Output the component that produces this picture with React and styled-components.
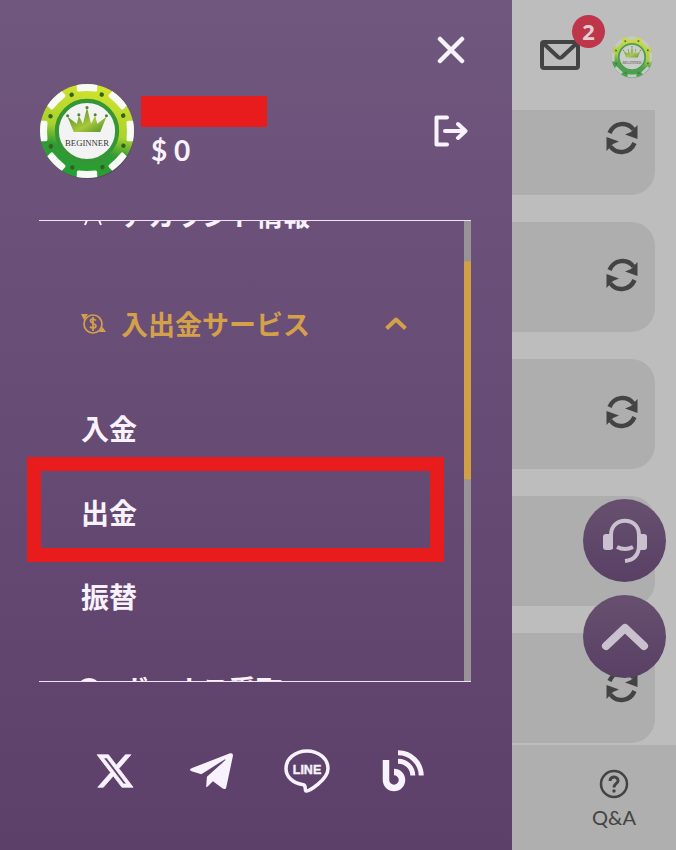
import React, { useLayoutEffect, useRef, useState } from 'react';
import { FaTelegramPlane } from 'react-icons/fa';
import { FaXTwitter } from 'react-icons/fa6';
import styled, { createGlobalStyle } from 'styled-components';


const GlobalStyle = createGlobalStyle`
  * {
    box-sizing: border-box;
  }
  body {
    margin: 0;
    background: #bdbdbd;
    font-family: "Noto Sans", "Noto Sans CJK JP", sans-serif;
  }
  ul {
    margin: 0;
    padding: 0;
    list-style: none;
  }
  button {
    padding: 0;
    border: none;
    background: none;
    color: inherit;
    font: inherit;
    cursor: pointer;
  }
  a {
    color: inherit;
    text-decoration: none;
  }
  svg {
    display: block;
  }
`

const Layout = styled.div`
  display: grid;
  grid-template-columns: minmax(0, 1fr) 164px;
  height: 100vh;
`

/* drawer */

const Drawer = styled.aside`
  display: flex;
  flex-direction: column;
  min-height: 0;
  padding: 0 41px 0 39px;
  background: linear-gradient(#70577e, #5d406a);
  color: #f8f2fd;
`
const CloseRow = styled.div`
  display: flex;
  justify-content: flex-end;
  padding: 36px 6px 0 0;
`
const Profile = styled.div`
  display: flex;
  align-items: center;
  height: 98px;
  margin: 18px 0 40px;
`
const ProfileText = styled.div`
  display: flex;
  flex-direction: column;
  flex: 1;
  padding: 6px 0 0 6px;
`
const NameBar = styled.div`
  width: 126px;
  height: 31px;
  background: #e81c1c;
`
const Balance = styled.span`
  padding-left: 10px;
  font-family: Lato, sans-serif;
  font-size: 28px;
  font-weight: 700;
  line-height: 46px;
`
const LogoutButton = styled.button`
  padding-right: 3px;
`
const MenuArea = styled.nav`
  position: relative;
  display: flex;
  flex: 1;
  min-height: 0;
  border-top: 1px solid #eee4f2;
  border-bottom: 1px solid #eee4f2;
`
const MenuScroll = styled.div`
  flex: 1;
  padding: 28px 0 360px;
  overflow-y: auto;
  scrollbar-width: none;
`
const Track = styled.div`
  width: 7px;
  background: #989397;
`
const Thumb = styled.div`
  background: #d19f45;
`
const MenuTitle = styled.button`
  display: flex;
  align-items: center;
  width: 100%;
  height: 101px;
  margin-bottom: 8px;
  padding: 0 56px 0 42px;
  color: ${props => props.$open ? '#d4a04a' : 'inherit'};
  font-size: 27px;
  font-weight: 700;
`
const TitleIcon = styled.span`
  width: 40px;
`
const TitleLabel = styled.span`
  flex: 1;
  text-align: left;
`
const SubList = styled.ul`
  padding-top: 4px;
`
const SubLink = styled.a`
  display: flex;
  align-items: center;
  height: 84px;
  padding-left: 42px;
  font-size: 28px;
  font-weight: 700;
`
const Marker = styled.div`
  position: absolute;
  top: 236px;
  left: -12px;
  right: 27px;
  height: 105px;
  border: 14px solid #e81c1c;
  pointer-events: none;
`
const Socials = styled.div`
  display: grid;
  grid-template-columns: repeat(4, 1fr);
  place-items: center;
  height: 168px;
  padding: 10px 20px 0 28px;
`

/* page behind the drawer */

const Page = styled.main`
  display: flex;
  flex-direction: column;
  min-height: 0;
  background: #bdbdbd;
  color: #434343;
`
const TopBar = styled.header`
  display: flex;
  justify-content: flex-end;
  align-items: center;
  gap: 31px;
  height: 110px;
  padding: 4px 23px 0 0;
`
const MailButton = styled.button`
  position: relative;
  padding-bottom: 4px;
`
const Badge = styled.span`
  position: absolute;
  top: -25px;
  right: -25px;
  width: 33px;
  height: 33px;
  border-radius: 50%;
  background: #bf3549;
  color: #dcd0d2;
  font-size: 22px;
  font-weight: 700;
  line-height: 33px;
`
const CardList = styled.div`
  display: flex;
  flex: 1;
  flex-direction: column;
  justify-content: flex-end;
  gap: 27px;
  min-height: 0;
  padding: 0 21px 2px 0;
  overflow: hidden;
`
const Card = styled.section`
  display: flex;
  flex-shrink: 0;
  justify-content: flex-end;
  align-items: center;
  height: 110px;
  padding: 0 16px 4px 0;
  border-radius: 0 24px 24px 0;
  background: #aeaeae;
`
const TabBar = styled.footer`
  display: flex;
  justify-content: center;
  height: 105px;
  padding: 24px 0 0 40px;
  background: #afafaf;
`
const TabLink = styled.a`
  display: flex;
  flex-direction: column;
  align-items: center;
  gap: 4px;
  font-family: Lato, sans-serif;
  font-size: 20px;
  line-height: 28px;
`
const Floating = styled.div`
  position: fixed;
  right: 10px;
  bottom: 172px;
  display: flex;
  flex-direction: column;
  gap: 13px;
`
const RoundButton = styled.button`
  display: flex;
  justify-content: center;
  align-items: center;
  width: 83px;
  height: 83px;
  border-radius: 50%;
  background: linear-gradient(#67506f, #594065);
  color: #c9c1cd;
`

const Chip = ({ size, id, dim }) => (
    <svg width={size} height={size} viewBox="0 0 94 94" opacity={dim ? 0.8 : 1}>
        <defs>
            <linearGradient id={id} x1="0.6" y1="0" x2="0.4" y2="1">
                <stop offset="0" stopColor="#d5e42c" />
                <stop offset="0.5" stopColor="#a8d22c" />
                <stop offset="0.7" stopColor="#319a34" />
                <stop offset="1" stopColor="#23a032" />
            </linearGradient>
            <linearGradient id={`${id}-crown`} x1="0" y1="0" x2="1" y2="1">
                <stop offset="0" stopColor="#3d7a2e" />
                <stop offset="0.6" stopColor="#a8c83b" />
                <stop offset="1" stopColor="#4e8d2c" />
            </linearGradient>
        </defs>
        <circle cx="48" cy="49" r="45" fill="#2c2338" opacity="0.25" />
        <circle cx="47" cy="47" r="46" fill={`url(#${id})`} />
        <g fill={dim ? '#c9cdc9' : '#f7faf5'}>
            {[0, 45, 90, 135, 180, 225, 270, 315].map(a => (
                <path key={a} d="M37 2 Q47 0 57 2 V6.500 Q57 8.500 55 8.300 Q47 7.500 39 8.300 Q37 8.500 37 6.500Z"
                    transform={`rotate(${a} 47 47)`} />
            ))}
        </g>
        {[22, 67, 112, 157, 202, 247, 292, 337].map(a => (
            <circle key={a} cx="85.500" cy="47" r="2.200" fill="#35601f" transform={`rotate(${a} 47 47)`} />
        ))}
        <circle cx="47" cy="47" r="29.500" fill={dim ? '#cfd2cf' : '#f3f3f3'} stroke="#369537" strokeWidth="4" />
        <path d="M34 48 L28 33 L37 40 L39 32 L43 40 L47 24 L51 40 L55 32 L57 40 L66 33 L60 48Z"
            fill={`url(#${id}-crown)`} />
        <g fill="#4a8735">
            <circle cx="28" cy="32" r="1.500" />
            <circle cx="39" cy="31" r="1.500" />
            <circle cx="47" cy="24" r="1.500" />
            <circle cx="55" cy="31" r="1.500" />
            <circle cx="66" cy="32" r="1.500" />
        </g>
        <text x="47" y="62" textAnchor="middle" fontFamily="Liberation Serif, serif" fontSize="8.500"
            fill="#333">BEGINNER</text>
    </svg>
)

const SyncIcon = () => (
    <svg width="34" height="34" viewBox="0 0 34 34" fill="none" stroke="currentColor" strokeWidth="4.500">
        <path d="M4.500 12 C9 1.500 22 0 28.500 8.500" />
        <path d="M29.500 22 C25 32.500 12 34 5.500 25.500" />
        <path d="M32.500 4 V18 L20 13.500 L26 11Z" fill="currentColor" stroke="none" />
        <path d="M1.500 30 V16 L14 20.500 L8 23Z" fill="currentColor" stroke="none" />
    </svg>
)

const CoinIcon = () => (
    <svg width="25" height="22" viewBox="0 0 25 22" fill="none" stroke="currentColor" strokeWidth="1.700">
        <circle cx="12" cy="11" r="9" />
        <path d="M15 7.500 C13 5.500 9 5.500 9.500 8 C10 10.500 15 10.500 15 13 C14.500 15.500 10 15.500 9 13.500 M12 4 V18" />
        <path d="M0 1 H7 L3 7Z M25 19 H18 L21.500 14Z" fill="currentColor" stroke="none" />
    </svg>
)

const ChevronIcon = ({ width, height, stroke, cap = 'round' }) => (
    <svg width={width} height={height} viewBox="0 0 24 14" fill="none" stroke="currentColor"
        strokeWidth={stroke} strokeLinecap={cap} strokeLinejoin="round">
        <path d="M2.500 11.500 L12 2.500 L21.500 11.500" />
    </svg>
)

const LineIcon = () => (
    <svg width="46" height="44" viewBox="0 0 46 44" fill="none" stroke="currentColor" strokeWidth="3.500">
        <path d="M23 2 C11 2 2 10 2 19.500 C2 28 9 34 18.500 35.500 C23 36 20 40 22 42 C24 43 44 31 44 19.500 C44 10 35 2 23 2Z" />
        <text x="23" y="24.500" textAnchor="middle" fontFamily="Liberation Sans, sans-serif" fontSize="12.500"
            fontWeight="700" fill="currentColor" stroke="currentColor" strokeWidth="0.400">LINE</text>
    </svg>
)

const BlogIcon = () => (
    <svg width="43" height="42" viewBox="0 0 43 42" fill="none" stroke="currentColor">
        <path d="M4 10 V30 A8 8 0 1 0 12 22" strokeWidth="6.500" />
        <path d="M16 2.800 A23 23 0 0 1 39.200 25.500" strokeWidth="5" />
        <path d="M16 11.200 A14.500 14.500 0 0 1 30.800 25.500" strokeWidth="5" />
    </svg>
)

const socials = [
    { label: 'X', icon: <FaXTwitter size={40} stroke="currentColor" strokeWidth={10} /> },
    { label: 'Telegram', icon: <FaTelegramPlane size={49} /> },
    { label: 'LINE', icon: <LineIcon /> },
    { label: 'Blog', icon: <BlogIcon /> },
]

const Menu = () => {
    const scroller = useRef(null)
    const [thumb, setThumb] = useState({ height: 0, top: 0 })

    const syncThumb = () => {
        const el = scroller.current
        const ratio = el.clientHeight / el.scrollHeight
        setThumb({ height: el.clientHeight * ratio, top: el.scrollTop * ratio })
    }

    useLayoutEffect(() => {
        scroller.current.scrollTop = 85
        syncThumb()
    }, [])

    return (
        <MenuArea>
            <MenuScroll ref={scroller} onScroll={syncThumb}>
                <MenuTitle>
                    <TitleIcon>
                        <svg width="24" height="26" viewBox="0 0 24 26" fill="none" stroke="currentColor" strokeWidth="2">
                            <circle cx="12" cy="7" r="5" />
                            <path d="M4 23 L8 13 H16 L20 23" />
                        </svg>
                    </TitleIcon>
                    <TitleLabel>アカウント情報</TitleLabel>
                </MenuTitle>
                <MenuTitle $open aria-expanded="true">
                    <TitleIcon><CoinIcon /></TitleIcon>
                    <TitleLabel>入出金サービス</TitleLabel>
                    <ChevronIcon width={24} height={14} stroke={4} cap="butt" />
                </MenuTitle>
                <SubList>
                    <li><SubLink href="#deposit">入金</SubLink></li>
                    <li><SubLink href="#withdraw">出金</SubLink></li>
                    <li><SubLink href="#transfer">振替</SubLink></li>
                </SubList>
                <MenuTitle>
                    <TitleIcon>
                        <svg width="20" height="24" viewBox="0 0 20 24" fill="currentColor">
                            <ellipse cx="8" cy="7" rx="9" ry="6" />
                            <path d="M1 13 H15 V24 H1Z" />
                        </svg>
                    </TitleIcon>
                    <TitleLabel>ボーナス受取</TitleLabel>
                </MenuTitle>
            </MenuScroll>
            <Track>
                <Thumb style={{ height: thumb.height, transform: `translateY(${thumb.top}px)` }} />
            </Track>
            <Marker />
        </MenuArea>
    )
}

const App = () => {
    return (
        <>
            <GlobalStyle />
            <Layout>
                <Drawer>
                    <CloseRow>
                        <button aria-label="Close">
                            <svg width="28" height="28" viewBox="0 0 28 28" stroke="currentColor" strokeWidth="4.500" strokeLinecap="round">
                                <path d="M3 3 L25 25 M25 3 L3 25" />
                            </svg>
                        </button>
                    </CloseRow>
                    <Profile>
                        <Chip size={96} id="chip" />
                        <ProfileText>
                            <NameBar />
                            <Balance>$ 0</Balance>
                        </ProfileText>
                        <LogoutButton aria-label="Log out">
                            <svg width="34" height="32" viewBox="0 0 34 32" fill="none" stroke="currentColor"
                                strokeWidth="4" strokeLinecap="round" strokeLinejoin="round">
                                <path d="M13 2.500 H2.500 V29.500 H13" />
                                <path d="M11 16 H31 M24 9 L31.500 16 L24 23" />
                            </svg>
                        </LogoutButton>
                    </Profile>
                    <Menu />
                    <Socials>
                        {socials.map(item => (
                            <a key={item.label} href="#social" aria-label={item.label}>{item.icon}</a>
                        ))}
                    </Socials>
                </Drawer>

                <Page>
                    <TopBar>
                        <MailButton aria-label="Messages">
                            <svg width="40" height="30" viewBox="0 0 40 30" fill="none" stroke="currentColor" strokeWidth="4" strokeLinejoin="round">
                                <rect x="2" y="2" width="36" height="26" rx="2" />
                                <path d="M3 3 L18 17 Q20 18.500 22 17 L37 3" />
                            </svg>
                            <Badge>2</Badge>
                        </MailButton>
                        <Chip size={42} id="chip-small" dim />
                    </TopBar>
                    <CardList>
                        {[1, 2, 3, 4, 5].map(n => (
                            <Card key={n}>
                                <button aria-label="Refresh"><SyncIcon /></button>
                            </Card>
                        ))}
                    </CardList>
                    <TabBar>
                        <TabLink href="#qa">
                            <svg width="30" height="30" viewBox="0 0 30 30" fill="none" stroke="currentColor" strokeWidth="2.500">
                                <circle cx="15" cy="15" r="13" />
                                <path d="M11 12 C11 6.500 19.500 7 19 12 C18.500 15 15 14.500 15 18.500" strokeWidth="3" />
                                <circle cx="15" cy="22" r="1.700" fill="currentColor" stroke="none" />
                            </svg>
                            Q&amp;A
                        </TabLink>
                    </TabBar>
                </Page>
            </Layout>

            <Floating>
                <RoundButton aria-label="Support">
                    <svg width="46" height="46" viewBox="0 0 46 46" fill="none" stroke="currentColor" strokeWidth="4">
                        <path d="M9 31 V17 C9 -2 37 -2 37 17 V27 C37 37 32 42 23 43" />
                        <rect x="1" y="16" width="10" height="16" rx="3" fill="currentColor" stroke="none" />
                        <rect x="35" y="16" width="10" height="16" rx="3" fill="currentColor" stroke="none" />
                        <path d="M15 29 Q23 33 31 29" />
                    </svg>
                </RoundButton>
                <RoundButton aria-label="Back to top">
                    <ChevronIcon width={48} height={28} stroke={4} />
                </RoundButton>
            </Floating>
        </>
    );
};

export default App;
